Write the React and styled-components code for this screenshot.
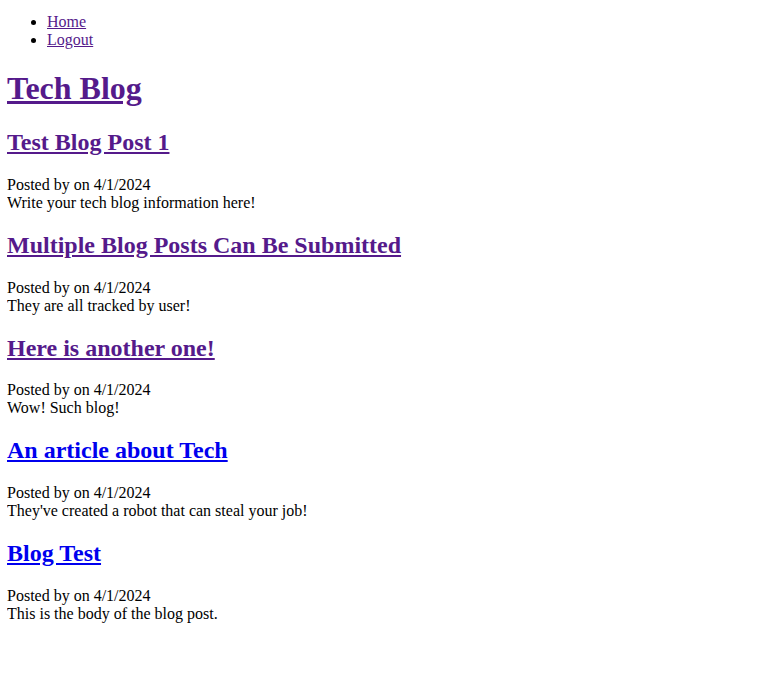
import React from "react";
import styled, { createGlobalStyle } from "styled-components";

const GlobalStyle = createGlobalStyle`
  body {
    margin: 0 7px 8px;
    font-family: "Liberation Serif", "Times New Roman", serif;
    font-size: 16px;
    color: #000;
    background: #fff;
  }
`;

const posts = [
  { id: 1, title: "Test Blog Post 1", date: "4/1/2024", body: "Write your tech blog information here!", visited: true },
  { id: 2, title: "Multiple Blog Posts Can Be Submitted", date: "4/1/2024", body: "They are all tracked by user!", visited: true },
  { id: 3, title: "Here is another one!", date: "4/1/2024", body: "Wow! Such blog!", visited: true },
  { id: 4, title: "An article about Tech", date: "4/1/2024", body: "They've created a robot that can steal your job!", visited: false },
  { id: 5, title: "Blog Test", date: "4/1/2024", body: "This is the body of the blog post.", visited: false },
];

const Link = styled.a`
  color: ${(p) => (p.$visited ? "#551a8b" : "#0000ee")};
  text-decoration: underline;
  cursor: pointer;
`;

const NavList = styled.ul`
  margin: 13px 0 16px;
  padding-left: 40px;
  list-style: disc;
`;

const Title = styled.h1`
  font-size: 2em;
  font-weight: bold;
  margin: 0.67em 0;
`;

const PostTitle = styled.h2`
  font-size: 1.5em;
  font-weight: bold;
  margin: 0.83em 0;
`;

const Meta = styled.div``;

const Body = styled.div``;

const App = () => {
  return (
    <>
      <GlobalStyle />
      <header>
        <NavList>
          <li><Link href="#" $visited>Home</Link></li>
          <li><Link href="#" $visited>Logout</Link></li>
        </NavList>
        <Title><Link href="#" $visited>Tech Blog</Link></Title>
      </header>
      <main>
        {posts.map((post) => (
          <article key={post.id}>
            <PostTitle>
              <Link href="#" $visited={post.visited}>{post.title}</Link>
            </PostTitle>
            <Meta>Posted by  on {post.date}</Meta>
            <Body>{post.body}</Body>
          </article>
        ))}
      </main>
    </>
  );
};

export default App;
